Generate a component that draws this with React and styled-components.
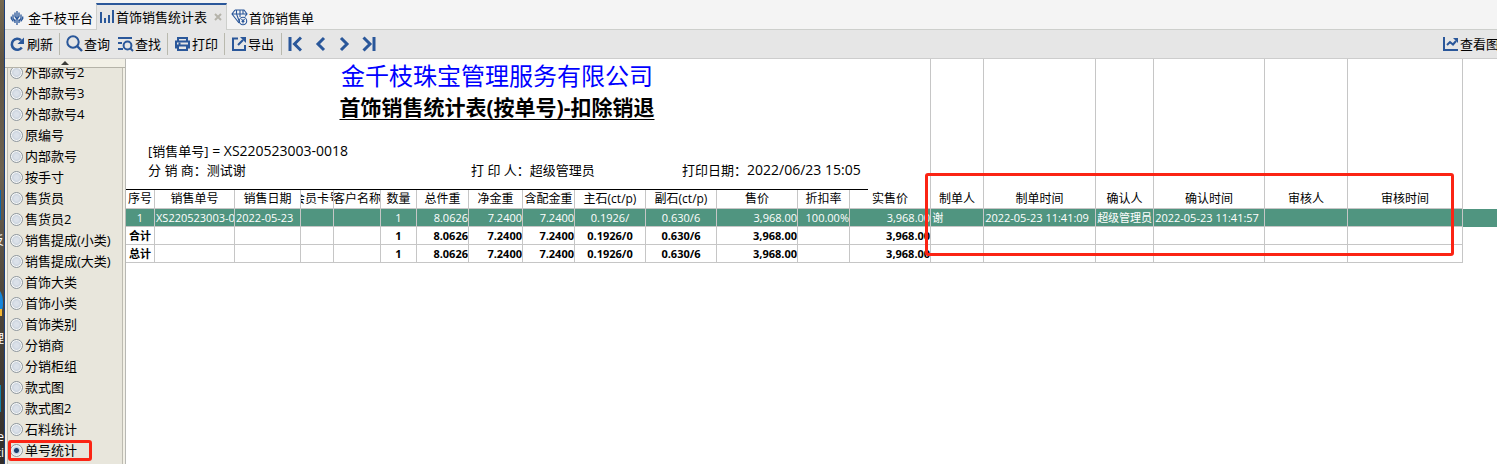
import React from 'react';
import styled, { createGlobalStyle } from 'styled-components';

const GlobalStyle = createGlobalStyle`
  * {
    box-sizing: border-box;
  }

  body {
    margin: 0;
    background: #ffffff;
    color: #000000;
    font-family: "Open Sans", "Noto Sans CJK SC", sans-serif;
    font-size: 13px;
    overflow: hidden;
  }
`;

const Screen = styled.div`
  display: flex;
  height: 100vh;
  overflow: hidden;
`;

const Desktop = styled.div`
  flex: none;
  width: 4px;
  overflow: hidden;
  background: linear-gradient(180deg, #75684f 0, #5e5343 60px, #6d6250 170px, #4e463b 300px, #332e2a 464px);

  svg {
    display: block;
  }
`;

const Window = styled.div`
  flex: 1;
  min-width: 0;
  display: flex;
  flex-direction: column;
  border-left: 1px solid #1c3f7c;
`;

const TabBar = styled.nav`
  display: flex;
  flex: none;
  height: 30px;
  padding-top: 3px;
  background: #f4f4f4;
  border-bottom: 1px solid #cdcfcc;
`;

const Tab = styled.div`
  display: flex;
  align-items: center;
  height: 27px;
  padding: ${({ $active }) => ($active ? '0 4px 2px 2px' : '2px 3px 0 4px')};
  background: ${({ $active }) => ($active ? '#e6e6e6' : 'transparent')};
  border: solid #cdcfcc;
  border-width: ${({ $active }) => ($active ? '0 1px' : '0')};
  border-top: ${({ $active }) => ($active ? '2px solid #2a579a' : '0')};
`;

const TabButton = styled.button`
  display: flex;
  align-items: center;
  gap: ${({ $gap }) => $gap || 1}px;
  padding: 0;
  border: 0;
  background: none;
  color: #000000;
  font: inherit;
  line-height: 18px;
  white-space: nowrap;
`;

const CloseButton = styled.button`
  display: flex;
  margin-left: 7px;
  padding: 0;
  border: 0;
  background: none;
`;

const ToolBar = styled.div`
  display: flex;
  flex: none;
  align-items: center;
  height: 29px;
  padding-left: 4px;
  padding-bottom: 1px;
  background: #e6e6e6;
  border-bottom: 1px solid #cdcdcd;
  overflow: hidden;
`;

const ToolButton = styled.button`
  display: flex;
  flex: none;
  align-items: center;
  gap: 1px;
  padding: 0;
  margin-right: ${({ $gap }) => $gap || 0}px;
  border: 0;
  background: none;
  color: #000000;
  font: inherit;
  line-height: 20px;
  white-space: nowrap;
`;

const ChartButton = styled(ToolButton)`
  margin-left: auto;
  margin-right: -2px;
`;

const Divider = styled.span`
  flex: none;
  width: 1px;
  height: 22px;
  margin-right: 6px;
  background: #b9b9ae;
`;

const Body = styled.div`
  display: flex;
  flex: 1;
  min-height: 0;
`;

const SideBar = styled.aside`
  display: flex;
  flex: none;
  flex-direction: column;
  width: 121px;
  background: #f2f0e6;
  border-right: 1px solid #b8b8b4;
`;

const ScrollUp = styled.button`
  display: flex;
  flex: none;
  align-items: center;
  justify-content: center;
  height: 9px;
  padding: 0;
  border: 0;
  border-bottom: 1px solid #b5b3a8;
  background: #f2f0e6;
`;

const OptionList = styled.div`
  display: flex;
  flex: 1;
  flex-direction: column;
  justify-content: flex-end;
  min-height: 0;
  margin: 0 2px;
  padding-bottom: 3px;
  background: #e8e6dc;
  border: solid #bdbbb1;
  border-width: 0 1px;
  overflow: hidden;
`;

const Option = styled.label`
  position: relative;
  display: flex;
  flex: none;
  align-items: center;
  gap: 2px;
  height: 21px;
  padding-left: 2px;
  line-height: 21px;
  white-space: nowrap;
`;

const Radio = styled.input`
  appearance: none;
  flex: none;
  width: 13px;
  height: 13px;
  margin: 0;
  border: 1px solid #8e979e;
  border-radius: 50%;
  background: ${({ defaultChecked }) =>
    defaultChecked
      ? 'radial-gradient(circle, #1d3f6e 0 2px, #c3d3e2 3px, #f3f5f6 5px)'
      : 'radial-gradient(circle, #dbe1e9 0 2px, #cdd5df 4px, #f6f7f7 5px)'};
`;

const Mark = styled.span`
  position: absolute;
  border: 3px solid #fb2414;
  border-radius: 3px;
  pointer-events: none;
`;

const OptionMark = styled(Mark)`
  inset: 0 auto 0 0;
  width: 84px;
`;

const AuditMark = styled(Mark)`
  top: 114px;
  left: 799px;
  width: 529px;
  height: 83px;
`;

const Report = styled.main`
  position: relative;
  flex: 1;
  min-width: 0;
  background: #ffffff;
  overflow: hidden;
`;

const Sheet = styled.table`
  width: 100%;
  table-layout: fixed;
  border-collapse: separate;
  border-spacing: 0;
`;

const Col = styled.col`
  width: ${({ $width }) => ($width ? `${$width}px` : 'auto')};
`;

const ReportHead = styled.td`
  padding: 0;
  vertical-align: top;
  border-right: 1px solid #c6c6c6;
`;

const HeadInner = styled.div`
  width: 742px;
  height: 131px;
  border-bottom: 1px solid #000000;
`;

const Company = styled.div`
  color: #0000ff;
  font-size: 24px;
  line-height: 34px;
  text-align: center;
`;

const Title = styled.h1`
  margin: 0;
  font-size: 21px;
  font-weight: 700;
  line-height: 28px;
  text-align: center;
  text-decoration: underline;
  text-decoration-thickness: 1px;
  text-underline-offset: 4px;
`;

const Condition = styled.div`
  height: 40px;
  padding: 21px 0 0 22px;
  line-height: 19px;
`;

const MetaRow = styled.div`
  display: grid;
  grid-template-columns: 323px 211px 1fr;
  align-items: baseline;
  padding-left: 22px;
  line-height: 19px;
  white-space: pre;
`;

const Latin = styled.span`
  font-size: 14px;
  line-height: 14px;
`;

const EmptyCell = styled.td`
  padding: 0;
  border-right: ${({ $last }) => ($last ? '0' : '1px solid #c6c6c6')};
`;

const HeadCell = styled.th`
  height: 19px;
  padding: 0;
  border: solid #c6c6c6;
  border-width: 0 1px 1px 0;
  font-size: 12px;
  font-weight: 400;
  line-height: 18px;
  white-space: nowrap;
  overflow: hidden;
`;

const HeadText = styled.span`
  display: flex;
  justify-content: center;
`;

const Cell = styled.td`
  height: 18px;
  padding: ${({ $align }) => ($align === 'left' ? '0 0 0 1px' : '0')};
  border: solid #c6c6c6;
  border-width: 0 1px 1px 0;
  font-size: 11px;
  line-height: 17px;
  text-align: ${({ $align }) => $align};
  white-space: nowrap;
  overflow: hidden;
`;

const Row = styled.tr`
  font-weight: ${({ $total }) => ($total ? 700 : 400)};
  color: ${({ $total }) => ($total ? '#000000' : '#ffffff')};
  background: ${({ $total }) => ($total ? '#ffffff' : '#509580')};
`;

const Rest = styled.td`
  padding: 0;
`;

const BLUE = '#2a579a';

const LeafIcon = () => (
  <svg width="16" height="16" viewBox="0 0 16 16" fill="none" stroke={BLUE} strokeWidth="1.3">
    <path d="M8 1v14" />
    <path d="M6 2.500v4L8 9M10 2.500v4L8 9M6 13V9.500M10 13V9.500" />
    <path d="M4 4.500v4l2 2.500M12 4.500v4L10 11M2.300 6.500v2l2 3M13.700 6.500v2l-2 3" />
  </svg>
);

const BarsIcon = () => (
  <svg width="16" height="16" viewBox="0 0 16 16" fill={BLUE}>
    <path d="M1 3h2v11H1zM5 9h2v5H5zM9 6h2v8H9zM13 1h2v13h-2z" />
  </svg>
);

const DiamondIcon = () => (
  <svg width="17" height="17" viewBox="0 0 17 17" fill="none" stroke={BLUE} strokeWidth="1.1">
    <path d="M4 1h9l3 4-2 2.500M8 14L1 5l3-4M1 5h15M5.500 1v4l3 8M9 1v4M12 1v4M9 5v3" />
    <circle cx="12" cy="12" r="3.7" />
    <path d="M10.500 10l1.500 2 1.500-2M12 12v2.500M10.500 12.500h3" />
  </svg>
);

const CloseIcon = () => (
  <svg width="8" height="8" viewBox="0 0 8 8" stroke="#b5b3aa" strokeWidth="2">
    <path d="M1 1l6 6M7 1L1 7" />
  </svg>
);

const RefreshIcon = () => (
  <svg width="17" height="16" viewBox="0 0 17 16" fill="none" stroke={BLUE} strokeWidth="2.6">
    <path d="M12.800 11.500A5.500 5.500 0 1 1 12 4.200" />
    <path d="M15 1.500v6.500H8.500z" fill={BLUE} stroke="none" />
  </svg>
);

const SearchIcon = () => (
  <svg width="17" height="17" viewBox="0 0 17 17" fill="none" stroke={BLUE} strokeWidth="2">
    <circle cx="7" cy="7" r="5.700" />
    <path d="M11 11l5 5" strokeWidth="2.400" />
  </svg>
);

const FindIcon = () => (
  <svg width="17" height="16" viewBox="0 0 17 16" fill="none" stroke={BLUE} strokeWidth="2">
    <path d="M1 2h14M1 7h4M1 13h5" />
    <circle cx="10.500" cy="9.500" r="3.900" />
    <path d="M13 12l3 3" />
  </svg>
);

const PrintIcon = () => (
  <svg width="17" height="16" viewBox="0 0 17 16" fill="none" stroke={BLUE} strokeWidth="2">
    <path d="M4 5V2h9v3M4 11.500H2v-6h13v6h-2" />
    <path d="M4 9.500h9V14H4zM4.500 7.500h2" />
  </svg>
);

const ExportIcon = () => (
  <svg width="16" height="16" viewBox="0 0 16 16" fill="none" stroke={BLUE} strokeWidth="2">
    <path d="M7 2.500H2V14h12V9M7 9l5-5" />
    <path d="M9 1h6v6z" fill={BLUE} stroke="none" />
  </svg>
);

const ChartIcon = () => (
  <svg width="16" height="16" viewBox="0 0 16 16" fill="none" stroke={BLUE} strokeWidth="2">
    <path d="M1 1v13h14" />
    <path d="M4 9l3-3 3 2.500L13 5" />
    <path d="M10 2h5v5z" fill={BLUE} stroke="none" />
  </svg>
);

const navPaths = {
  first: 'M2 1v14M13 1.500L6.500 8l6.500 6.500',
  prev: 'M10 2L4 8l6 6',
  next: 'M4 2l6 6-6 6',
  last: 'M12 1v14M1.500 1.500L8 8l-6.500 6.500',
};

const NavIcon = ({ name }) => (
  <svg width="14" height="16" viewBox="0 0 14 16" fill="none" stroke={BLUE} strokeWidth="3">
    <path d={navPaths[name]} />
  </svg>
);

const options = [
  '外部款号2', '外部款号3', '外部款号4', '原编号', '内部款号', '按手寸', '售货员',
  '售货员2', '销售提成(小类)', '销售提成(大类)', '首饰大类', '首饰小类', '首饰类别',
  '分销商', '分销柜组', '款式图', '款式图2', '石料统计', '单号统计',
];

const columns = [
  { title: '序号', width: 29, align: 'center' },
  { title: '销售单号', width: 80, align: 'left' },
  { title: '销售日期', width: 66, align: 'left' },
  { title: '会员卡号', width: 33, align: 'left' },
  { title: '客户名称', width: 47, align: 'left' },
  { title: '数量', width: 36, align: 'center' },
  { title: '总件重', width: 52, align: 'right' },
  { title: '净金重', width: 54, align: 'right' },
  { title: '含配金重', width: 52, align: 'right' },
  { title: '主石(ct/p)', width: 71, align: 'center' },
  { title: '副石(ct/p)', width: 71, align: 'center' },
  { title: '售价', width: 81, align: 'right' },
  { title: '折扣率', width: 52, align: 'right' },
  { title: '实售价', width: 81, align: 'right' },
  { title: '制单人', width: 53, align: 'left' },
  { title: '制单时间', width: 112, align: 'left' },
  { title: '确认人', width: 58, align: 'left' },
  { title: '确认时间', width: 111, align: 'left' },
  { title: '审核人', width: 83, align: 'left' },
  { title: '审核时间', width: 115, align: 'left' },
];

const totals = ['', '', '', '', '1', '8.0626', '7.2400', '7.2400', '0.1926/0', '0.630/6', '3,968.00', '', '3,968.00', '', '', '', '', '', ''];

const rows = [
  {
    cells: ['1', 'XS220523003-0', '2022-05-23', '', '', '1', '8.0626', '7.2400', '7.2400', '0.1926/', '0.630/6', '3,968.00', '100.00%', '3,968.00', '谢', '2022-05-23 11:41:09', '超级管理员', '2022-05-23 11:41:57', '', ''],
  },
  { total: true, cells: ['合计', ...totals] },
  { total: true, cells: ['总计', ...totals] },
];

const App = () => (
  <>
    <GlobalStyle />
    <Screen>
      <Desktop>
        <svg width="4" height="464" viewBox="0 0 4 464">
          <rect x="0" y="190" width="1" height="30" fill="#0a63a8" />
          <path d="M0 291q3 4 3 12t-3 10z" fill="#1486dc" />
          <rect x="0" y="309" width="2" height="7" fill="#f2b632" />
          <rect x="0" y="385" width="1" height="27" fill="#1280a8" />
          <g fill="#ffffff" fontSize="12" textAnchor="end">
            <text x="4" y="245">反</text>
            <text x="4" y="343">理</text>
            <text x="4" y="441">e</text>
            <text x="4" y="457">ti</text>
          </g>
        </svg>
      </Desktop>
      <Window>
        <TabBar>
          <Tab>
            <TabButton $gap={3}><LeafIcon />金千枝平台</TabButton>
          </Tab>
          <Tab $active>
            <TabButton><BarsIcon />首饰销售统计表</TabButton>
            <CloseButton aria-label="关闭"><CloseIcon /></CloseButton>
          </Tab>
          <Tab>
            <TabButton><DiamondIcon />首饰销售单</TabButton>
          </Tab>
        </TabBar>

        <ToolBar>
          <ToolButton $gap={6}><RefreshIcon />刷新</ToolButton>
          <Divider />
          <ToolButton $gap={7}><SearchIcon />查询</ToolButton>
          <ToolButton $gap={6}><FindIcon />查找</ToolButton>
          <Divider />
          <ToolButton $gap={6}><PrintIcon />打印</ToolButton>
          <Divider />
          <ToolButton $gap={7}><ExportIcon />导出</ToolButton>
          <Divider />
          <ToolButton $gap={12} aria-label="首条"><NavIcon name="first" /></ToolButton>
          <ToolButton $gap={9} aria-label="上一条"><NavIcon name="prev" /></ToolButton>
          <ToolButton $gap={11} aria-label="下一条"><NavIcon name="next" /></ToolButton>
          <ToolButton aria-label="末条"><NavIcon name="last" /></ToolButton>
          <ChartButton><ChartIcon />查看图</ChartButton>
        </ToolBar>

        <Body>
          <SideBar>
            <ScrollUp aria-label="向上">
              <svg width="8" height="4" viewBox="0 0 8 4"><path d="M4 0l4 4H0z" fill="#3c3c38" /></svg>
            </ScrollUp>
            <OptionList>
              {options.map((name, index) => (
                <Option key={name}>
                  <Radio type="radio" name="groupBy" defaultChecked={index === options.length - 1} />
                  {name}
                  {index === options.length - 1 && <OptionMark />}
                </Option>
              ))}
            </OptionList>
          </SideBar>

          <Report>
            <Sheet>
              <colgroup>
                {columns.map((column) => <Col key={column.title} $width={column.width} />)}
                <Col />
              </colgroup>
              <thead>
                <tr>
                  <ReportHead colSpan={14}>
                    <HeadInner>
                      <Company>金千枝珠宝管理服务有限公司</Company>
                      <Title>首饰销售统计表(按单号)-扣除销退</Title>
                      <Condition>[销售单号]<Latin> = XS220523003-0018</Latin></Condition>
                      <MetaRow>
                        <span>分 销 商：测试谢</span>
                        <span>打 印 人：超级管理员</span>
                        <span>打印日期：<Latin>2022/06/23 15:05</Latin></span>
                      </MetaRow>
                    </HeadInner>
                  </ReportHead>
                  {columns.slice(14).map((column) => <EmptyCell key={column.title} />)}
                  <EmptyCell $last />
                </tr>
                <tr>
                  {columns.map((column) => (
                    <HeadCell key={column.title} scope="col">
                      <HeadText>{column.title}</HeadText>
                    </HeadCell>
                  ))}
                  <Rest />
                </tr>
              </thead>
              <tbody>
                {rows.map((row, index) => (
                  <Row key={index} $total={row.total}>
                    {row.cells.map((cell, i) => (
                      <Cell key={i} $align={columns[i].align}>{cell}</Cell>
                    ))}
                    <Rest />
                  </Row>
                ))}
              </tbody>
            </Sheet>
            <AuditMark />
          </Report>
        </Body>
      </Window>
    </Screen>
  </>
);

export default App;
